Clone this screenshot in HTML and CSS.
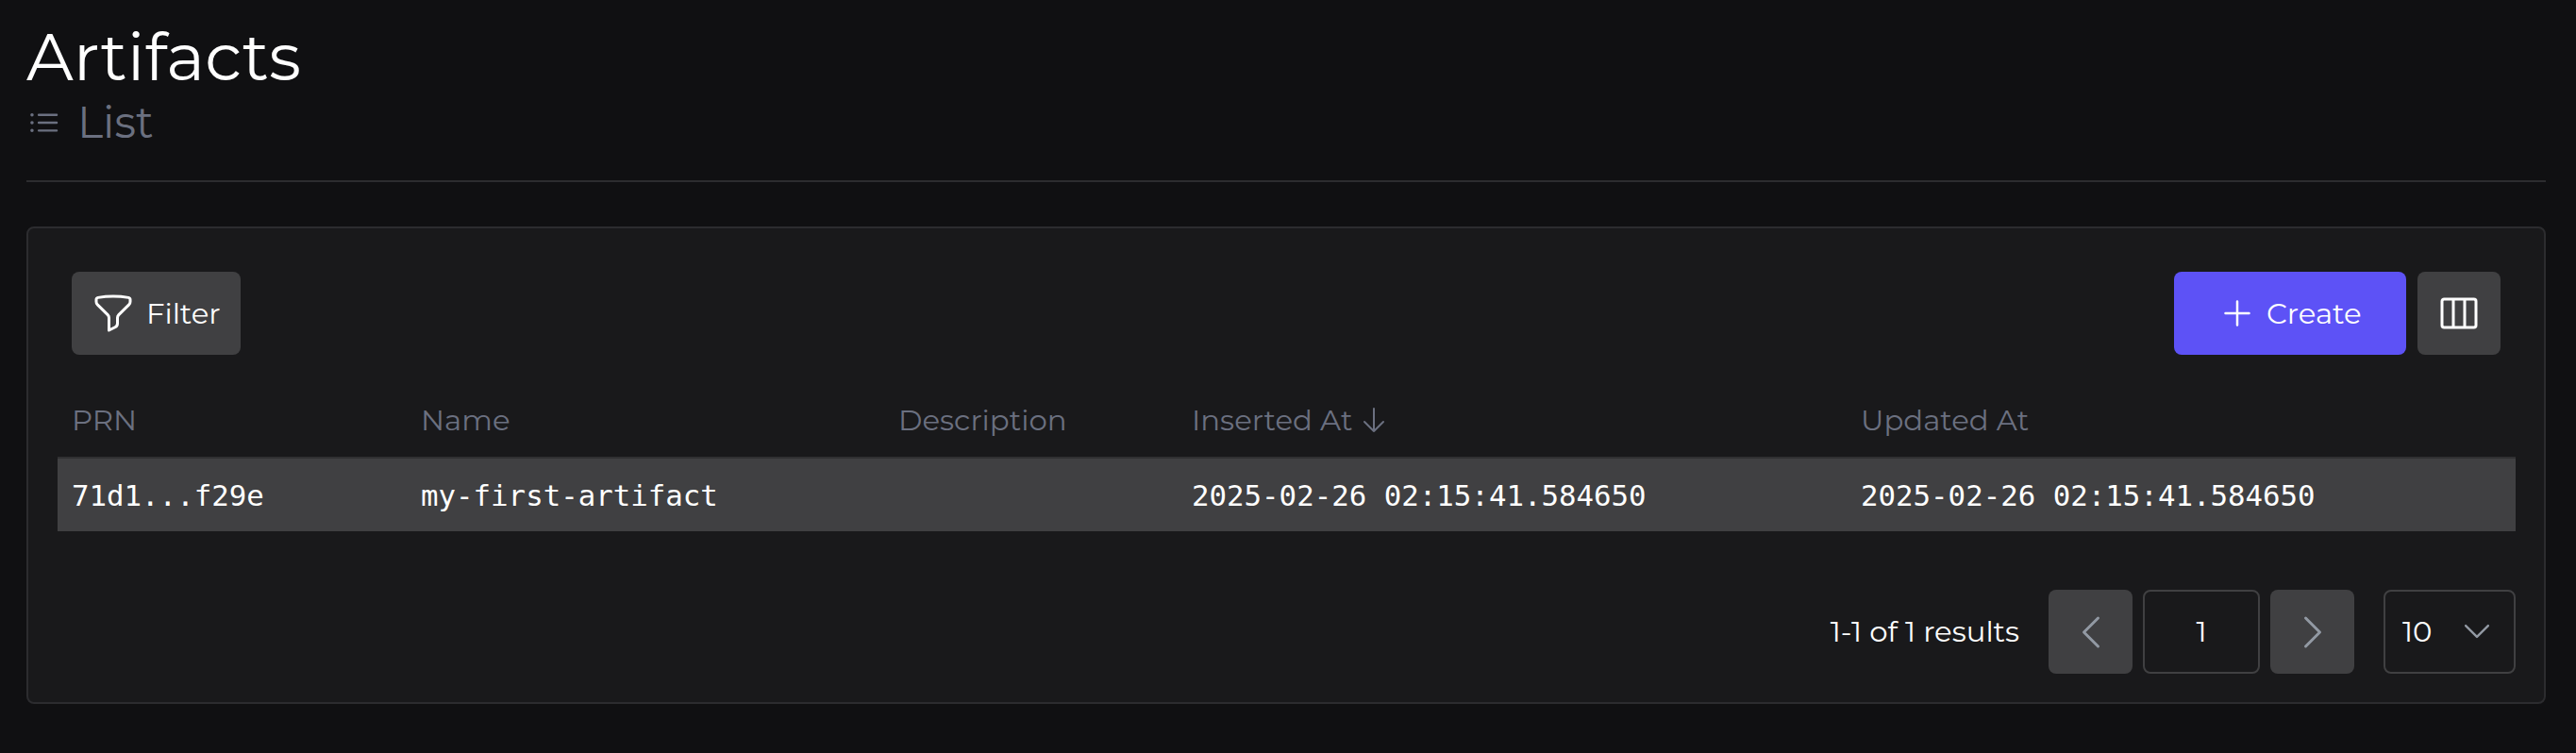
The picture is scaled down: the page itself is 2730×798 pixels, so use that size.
FILE: index.html
```html
<!DOCTYPE html>
<html lang="en">
<head>
<meta charset="utf-8">
<title>Artifacts</title>
<link rel="stylesheet" href="styles.css">
</head>
<body>
<main class="page">
  <header class="header">
    <h1 class="title">Artifacts</h1>
    <div class="subtitle">
      <svg class="icon icon-list" viewBox="0 0 24 24"><path d="M8.25 6.75h12M8.25 12h12m-12 5.25h12M3.75 6.75h.007v.008H3.75V6.75Zm.375 0a.375.375 0 1 1-.75 0 .375.375 0 0 1 .75 0ZM3.75 12h.007v.008H3.75V12Zm.375 0a.375.375 0 1 1-.75 0 .375.375 0 0 1 .75 0Zm-.375 5.25h.007v.008H3.75v-.008Zm.375 0a.375.375 0 1 1-.75 0 .375.375 0 0 1 .75 0Z"/></svg>
      <span>List</span>
    </div>
  </header>
  <section class="card">
    <div class="toolbar">
      <button class="btn btn-filter">
        <svg class="icon icon-lg" viewBox="0 0 24 24"><path d="M12 3c2.755 0 5.455.232 8.083.678.533.09.917.556.917 1.096v1.044a2.25 2.25 0 0 1-.659 1.591l-5.432 5.432a2.25 2.25 0 0 0-.659 1.591v2.927a2.25 2.25 0 0 1-1.244 2.013L9.75 21v-6.568a2.25 2.25 0 0 0-.659-1.591L3.659 7.409A2.25 2.25 0 0 1 3 5.818V4.774c0-.54.384-1.006.917-1.096A48.32 48.32 0 0 1 12 3Z"/></svg>
        <span>Filter</span>
      </button>
      <div class="actions">
        <button class="btn btn-create">
          <svg class="icon icon-md" viewBox="0 0 24 24"><path d="M12 4.5v15m7.5-7.5h-15"/></svg>
          <span>Create</span>
        </button>
        <button class="btn btn-square" aria-label="Columns">
          <svg class="icon icon-lg" viewBox="0 0 24 24"><path d="M9 4.5v15m6-15v15m-10.875 0h15.75c.621 0 1.125-.504 1.125-1.125V5.625c0-.621-.504-1.125-1.125-1.125H4.125C3.504 4.5 3 5.004 3 5.625v12.75c0 .621.504 1.125 1.125 1.125Z"/></svg>
        </button>
      </div>
    </div>
    <div class="table">
      <div class="row head">
        <div class="cell">PRN</div>
        <div class="cell">Name</div>
        <div class="cell">Description</div>
        <div class="cell sorted"><span>Inserted At</span><svg class="icon icon-sm" viewBox="0 0 24 24"><path d="M19.5 13.5 12 21m0 0-7.5-7.5M12 21V3"/></svg></div>
        <div class="cell">Updated At</div>
      </div>
      <div class="row data">
        <div class="cell">71d1...f29e</div>
        <div class="cell">my-first-artifact</div>
        <div class="cell"></div>
        <div class="cell">2025-02-26 02:15:41.584650</div>
        <div class="cell">2025-02-26 02:15:41.584650</div>
      </div>
    </div>
    <div class="pager">
      <span class="results">1-1 of 1 results</span>
      <button class="btn pager-btn" aria-label="Previous"><svg class="icon icon-lg" viewBox="0 0 24 24"><path d="M15.75 19.5 8.25 12l7.5-7.5"/></svg></button>
      <div class="field page-number">1</div>
      <button class="btn pager-btn" aria-label="Next"><svg class="icon icon-lg" viewBox="0 0 24 24"><path d="m8.25 4.5 7.5 7.5-7.5 7.5"/></svg></button>
      <div class="field page-size"><span>10</span><svg class="icon icon-chev" viewBox="0 0 24 24"><path d="m19.5 8.25-7.5 7.5-7.5-7.5"/></svg></div>
    </div>
  </section>
</main>
</body>
</html>
```
FILE: styles.css
```css
* { box-sizing: border-box; }
html, body { margin: 0; height: 100%; overflow: hidden; background: #101012; }
body { font-family: Montserrat, Inter, sans-serif; font-weight: 400; font-size: 30.8px; line-height: 40px; color: #fff; }
.page { padding: 18px 32px 0 28px; }
.header { height: 175px; border-bottom: 2px solid #2c2c2f; }
.title { margin: 0; font-size: 69.4px; line-height: 84px; height: 86px; font-weight: 400; }
.subtitle { display: flex; align-items: center; gap: 16px; height: 52px; color: #6b7080; font-size: 46px; line-height: 52px; }
.icon { display: block; flex: none; fill: none; stroke: currentColor; stroke-width: 1.5; stroke-linecap: round; stroke-linejoin: round; }
.icon-sm { width: 32px; height: 32px; }
.icon-list, .icon-chev { width: 38px; height: 38px; }
.icon-md { width: 40px; height: 40px; }
.icon-lg { width: 48px; height: 48px; }
.card { margin-top: 47px; height: 506px; border: 2px solid #2c2c2f; border-radius: 8px; background: #19191b; padding: 46px 30px 0 31px; }
.toolbar { display: flex; justify-content: space-between; padding: 0 16px 0 15px; }
.btn { display: flex; align-items: center; justify-content: center; height: 88px; border: 0; border-radius: 8px; padding: 0; background: #404042; color: #fff; font: inherit; }
.btn-filter { width: 179px; justify-content: flex-start; padding-left: 20px; gap: 11px; }
.actions { display: flex; gap: 12px; }
.btn-create { width: 246px; justify-content: flex-start; padding-left: 47px; gap: 11px; background: #5d52f6; }
.btn-square { width: 88px; }
.table { margin-top: 30px; }
.row { display: grid; grid-template-columns: 370px 506px 311px 709px 1fr; align-items: center; }
.cell { padding-left: 15px; white-space: nowrap; }
.head { height: 80px; border-bottom: 2px solid #303032; color: #6b7080; }
.sorted { display: flex; align-items: center; gap: 7px; }
.data { height: 77px; background: #404042; font-family: "DejaVu Sans Mono", monospace; font-weight: 400; font-size: 30.77px; }
.pager { display: flex; justify-content: flex-end; align-items: center; margin-top: 62px; line-height: 38px; }
.results { margin-right: 31px; padding-bottom: 2px; }
.pager-btn { width: 89px; height: 89px; color: #9299a3; }
.field { display: flex; align-items: center; height: 89px; border: 2px solid #404042; border-radius: 8px; padding-bottom: 2px; }
.page-number { width: 124px; margin: 0 11px; justify-content: center; }
.page-size { width: 140px; margin-left: 31px; padding: 0 20px 2px 18px; justify-content: space-between; }
.page-size .icon { color: #9299a3; }
```
